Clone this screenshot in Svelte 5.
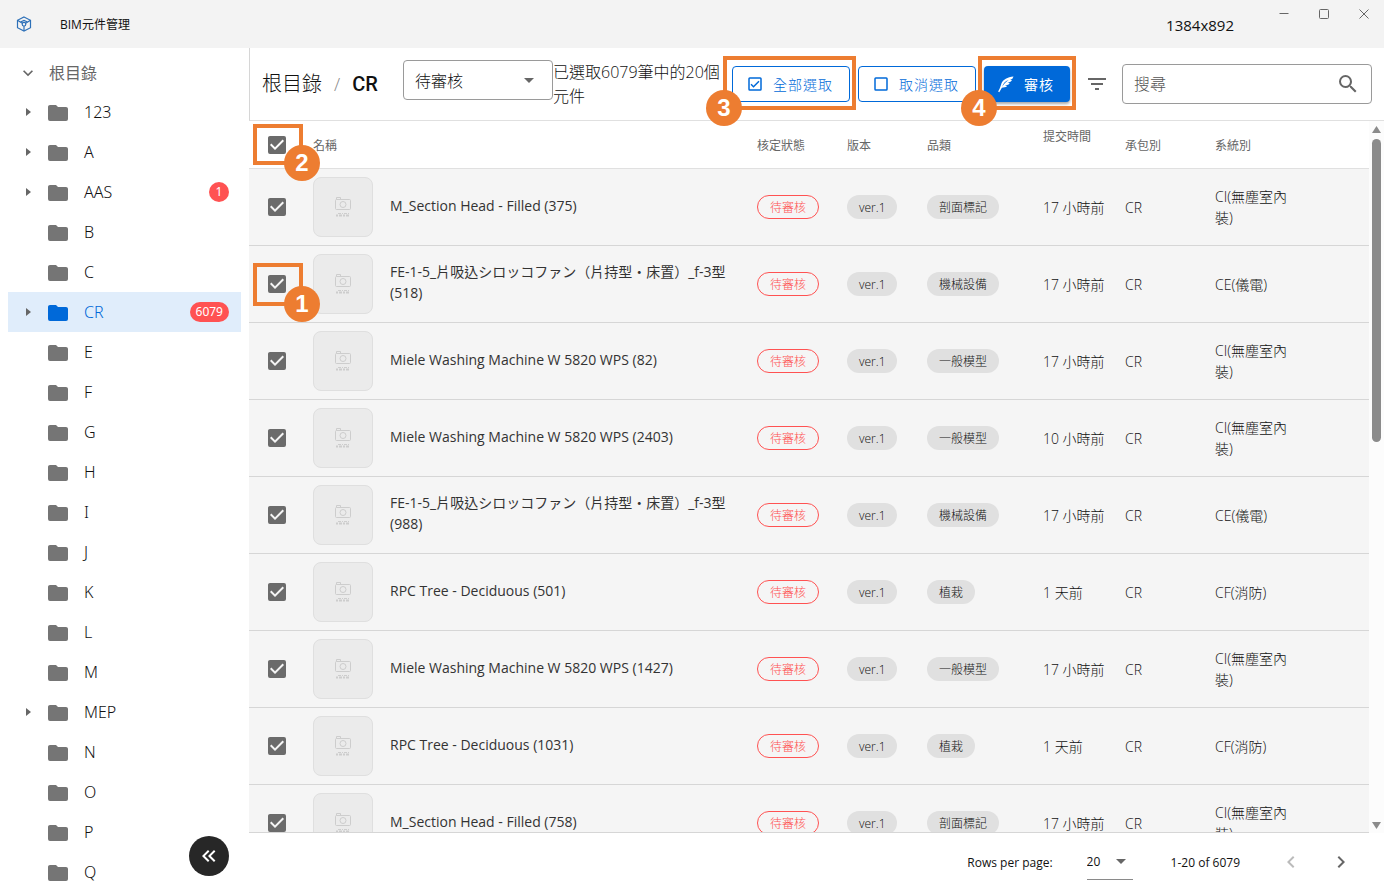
<script>
  const folders = [
    { name: '123', expandable: true },
    { name: 'A', expandable: true },
    { name: 'AAS', expandable: true, count: 1 },
    { name: 'B' },
    { name: 'C' },
    { name: 'CR', expandable: true, count: 6079 },
    ...['E', 'F', 'G', 'H', 'I', 'J', 'K', 'L', 'M'].map((name) => ({ name })),
    { name: 'MEP', expandable: true },
    ...['N', 'O', 'P', 'Q'].map((name) => ({ name }))
  ];
  let active = $state('CR');

  const CLEAN = 'CI(無塵室內裝)';
  const ELEC = 'CE(儀電)';
  const FIRE = 'CF(消防)';
  const fan = 'FE-1-5_片吸込シロッコファン（片持型・床置）_f-3型';
  let rows = $state([
    { name: 'M_Section Head - Filled (375)', kind: '剖面標記', time: '17 小時前', system: CLEAN, checked: true },
    { name: `${fan} (518)`, kind: '機械設備', time: '17 小時前', system: ELEC, checked: true, marked: true },
    { name: 'Miele Washing Machine W 5820 WPS (82)', kind: '一般模型', time: '17 小時前', system: CLEAN, checked: true },
    { name: 'Miele Washing Machine W 5820 WPS (2403)', kind: '一般模型', time: '10 小時前', system: CLEAN, checked: true },
    { name: `${fan} (988)`, kind: '機械設備', time: '17 小時前', system: ELEC, checked: true },
    { name: 'RPC Tree - Deciduous (501)', kind: '植栽', time: '1 天前', system: FIRE, checked: true },
    { name: 'Miele Washing Machine W 5820 WPS (1427)', kind: '一般模型', time: '17 小時前', system: CLEAN, checked: true },
    { name: 'RPC Tree - Deciduous (1031)', kind: '植栽', time: '1 天前', system: FIRE, checked: true },
    { name: 'M_Section Head - Filled (758)', kind: '剖面標記', time: '17 小時前', system: CLEAN, checked: true }
  ]);
  let all = $derived(rows.every((r) => r.checked));
  const setAll = (value) => rows.forEach((r) => (r.checked = value));
</script>

{#snippet caret()}
  <svg class="caret" viewBox="0 0 24 24" aria-hidden="true"><path d="M7 10l5 5 5-5z" /></svg>
{/snippet}

{#snippet check(checked, label, onchange)}
  <label class="check">
    <input type="checkbox" {checked} {onchange} aria-label={label} />
    <svg viewBox="0 0 24 24" aria-hidden="true">
      {#if checked}
        <path d="M10 17l-5-5 1.41-1.42L10 14.17l7.59-7.59L19 8m0-5H5c-1.11 0-2 .89-2 2v14a2 2 0 0 0 2 2h14a2 2 0 0 0 2-2V5a2 2 0 0 0-2-2z" />
      {:else}
        <path d="M19 3H5a2 2 0 0 0-2 2v14a2 2 0 0 0 2 2h14a2 2 0 0 0 2-2V5a2 2 0 0 0-2-2m0 2v14H5V5h14z" />
      {/if}
    </svg>
  </label>
{/snippet}

<div class="app">
  <header class="titlebar">
    <svg class="logo" viewBox="0 0 16 16" aria-hidden="true">
      <path d="M8 1l6.500 3.300v7.400L8 15l-6.500-3.300V4.300z" />
      <path d="M1.500 4.300L6.300 7.300M14.500 4.300L9.700 7.300M8 10v5M4.500 6L8 4.500 11.500 6" />
      <circle cx="8" cy="8.200" r="1.800" />
    </svg>
    <h1>BIM元件管理</h1>
    <span class="size">1384x892</span>
    <div class="window-buttons">
      <button aria-label="最小化"><svg viewBox="0 0 10 10"><path d="M.5 4.500h9" /></svg></button>
      <button aria-label="最大化"><svg viewBox="0 0 10 10"><rect x=".5" y=".5" width="9" height="9" rx="1" /></svg></button>
      <button aria-label="關閉"><svg viewBox="0 0 10 10"><path d="M.5.5l9 9M9.500.5l-9 9" /></svg></button>
    </div>
  </header>

  <div class="body">
    <nav class="sidebar">
      <button class="root">
        <svg viewBox="0 0 24 24" aria-hidden="true"><path d="M7.410 8.580L12 13.170l4.590-4.590L18 10l-6 6-6-6z" /></svg>
        根目錄
      </button>
      {#each folders as f}
        <button class="folder" class:active={active === f.name} onclick={() => (active = f.name)}>
          <span class="arrow">
            {#if f.expandable}<svg viewBox="0 0 5 8" aria-hidden="true"><path d="M0 0l5 4-5 4z" /></svg>{/if}
          </span>
          <svg class="folder-icon" viewBox="2 4 20 16" aria-hidden="true"><path d="M10 4H4c-1.110 0-2 .890-2 2v12a2 2 0 0 0 2 2h16a2 2 0 0 0 2-2V8c0-1.110-.900-2-2-2h-8z" /></svg>
          <span class="label">{f.name}</span>
          {#if f.count}<span class="badge">{f.count}</span>{/if}
        </button>
      {/each}
      <button class="collapse" aria-label="收合">
        <svg viewBox="0 0 24 24"><path d="M18.410 7.410L17 6l-6 6 6 6 1.410-1.410L13.830 12zM12.410 7.410L11 6l-6 6 6 6 1.410-1.410L7.830 12z" /></svg>
      </button>
    </nav>

    <main>
      <div class="toolbar">
        <div class="crumbs"><a href="#root">根目錄</a><span class="slash">/</span><strong>CR</strong></div>
        <div class="select">
          <select aria-label="核定狀態"><option>待審核</option></select>
          {@render caret()}
        </div>
        <p class="summary">已選取6079筆中的20個元件</p>
        <div class="actions">
          <div class="marker-anchor">
            <button class="outlined" onclick={() => setAll(true)}>
              <svg viewBox="0 0 24 24" aria-hidden="true"><path d="M19 3H5a2 2 0 0 0-2 2v14a2 2 0 0 0 2 2h14a2 2 0 0 0 2-2V5a2 2 0 0 0-2-2m0 2v14H5V5h14M10 17l-4-4 1.410-1.410L10 14.170l6.590-6.590L18 9" /></svg>
              全部選取
            </button>
            <span class="marker around-button wide"><b>3</b></span>
          </div>
          <button class="outlined" onclick={() => setAll(false)}>
            <svg viewBox="0 0 24 24" aria-hidden="true"><path d="M19 3H5a2 2 0 0 0-2 2v14a2 2 0 0 0 2 2h14a2 2 0 0 0 2-2V5a2 2 0 0 0-2-2m0 2v14H5V5h14z" /></svg>
            取消選取
          </button>
          <div class="marker-anchor">
            <button class="filled">
              <svg viewBox="0 0 24 24" aria-hidden="true"><path d="M22 2C14 3 8 6 6 11c-1 3-1.500 6-4.500 11l1.500 1 3.500-6 5.500-1 1.500-1.500-3-.2 5-1.800 1.500-2-3 0 4.500-2 1.500-2-2.500 0 3-1.500zM15.500 6.500C12 9 9 12 7 15.500 8 11 11 8 15.500 6.500z" fill-rule="evenodd" /></svg>
              審核
            </button>
            <span class="marker around-button"><b>4</b></span>
          </div>
        </div>
        <button class="filter" aria-label="篩選">
          <svg viewBox="0 0 24 24"><path d="M3 6h18v2H3zM6 11h12v2H6zM10 16h4v2h-4z" /></svg>
        </button>
        <div class="search">
          <input type="search" placeholder="搜尋" aria-label="搜尋" />
          <svg viewBox="0 0 24 24" aria-hidden="true"><path d="M9.500 3A6.500 6.500 0 0 1 16 9.500c0 1.610-.590 3.090-1.560 4.230l.27.270h.79l5 5-1.500 1.500-5-5v-.79l-.27-.27A6.516 6.516 0 0 1 9.500 16a6.500 6.500 0 0 1 0-13m0 2C7 5 5 7 5 9.500S7 14 9.500 14 14 12 14 9.500 12 5 9.500 5z" /></svg>
        </div>
      </div>

      <div class="table-area">
        <div class="table-clip">
          <table>
            <colgroup>
              <col class="c-check" /><col /><col class="c-status" /><col class="c-version" /><col class="c-kind" />
              <col class="c-time" /><col class="c-code" /><col class="c-system" /><col class="c-rest" />
            </colgroup>
            <thead>
              <tr>
                <th class="pick">
                  <div class="marker-anchor">
                    {@render check(all, '全選', () => setAll(!all))}
                    <span class="marker around-check"><b>2</b></span>
                  </div>
                </th>
                <th>名稱</th><th>核定狀態</th><th>版本</th><th>品類</th>
                <th class="sortable">提交時間</th><th>承包別</th><th>系統別</th><th></th>
              </tr>
            </thead>
            <tbody>
              {#each rows as r}
                <tr>
                  <td class="pick">
                    <div class="marker-anchor">
                      {@render check(r.checked, r.name, () => (r.checked = !r.checked))}
                      {#if r.marked}<span class="marker around-check tall"><b>1</b></span>{/if}
                    </div>
                  </td>
                  <td>
                    <div class="item">
                      <span class="thumb">
                        <svg viewBox="0 0 16 20" aria-hidden="true">
                          <rect x=".5" y="2.500" width="15" height="10" rx="1" />
                          <path d="M1.500 2.500v-2h4v2" />
                          <circle cx="8" cy="7.500" r="3" />
                          <path class="caption" d="M3 16.500h11" />
                          <path class="caption low" d="M1 18.500h14" />
                        </svg>
                      </span>
                      <span class="name">{r.name}</span>
                    </div>
                  </td>
                  <td><span class="chip pending">待審核</span></td>
                  <td><span class="chip">ver.1</span></td>
                  <td><span class="chip">{r.kind}</span></td>
                  <td>{r.time}</td>
                  <td>CR</td>
                  <td>{r.system}</td>
                  <td></td>
                </tr>
              {/each}
            </tbody>
          </table>
        </div>
        <div class="scrollbar" aria-hidden="true">
          <svg viewBox="0 0 9 7"><path d="M4.500 0L9 7H0z" /></svg>
          <span class="track"><span class="thumb-bar"></span></span>
          <svg viewBox="0 0 9 7"><path d="M0 0h9L4.500 7z" /></svg>
        </div>
      </div>

      <footer>
        <label for="page-size">Rows per page:</label>
        <div class="page-size">
          <select id="page-size"><option>20</option></select>
          {@render caret()}
        </div>
        <span class="range">1-20 of 6079</span>
        <button aria-label="上一頁" disabled><svg viewBox="0 0 24 24"><path d="M15.410 16.580L10.830 12l4.580-4.590L14 6l-6 6 6 6z" /></svg></button>
        <button aria-label="下一頁"><svg viewBox="0 0 24 24"><path d="M8.590 16.580L13.170 12 8.590 7.410 10 6l6 6-6 6z" /></svg></button>
      </footer>
    </main>
  </div>
</div>

<style>
  :global(body) { margin: 0; }
  .app {
    display: flex;
    flex-direction: column;
    height: 100vh;
    overflow: hidden;
    background: #fff;
    color: #111;
    font: 300 14px/21px "Open Sans", "Noto Sans CJK TC", sans-serif;
  }
  .app * { box-sizing: border-box; }
  button, select, input { font: inherit; color: inherit; }
  button { border: 0; padding: 0; background: none; cursor: pointer; }
  svg { display: block; flex: none; fill: currentColor; }

  .titlebar { display: flex; flex: none; height: 48px; padding-left: 16px; background: #f3f3f3; }
  .logo { width: 16px; height: 16px; margin: 16px 28px 0 0; fill: none; stroke: #2d70b8; stroke-width: 1.2; }
  h1 { flex: 1; margin: 0; padding-top: 1px; font-size: 12px; line-height: 48px; font-weight: 400; color: #111; }
  .size { padding: 13px 30px 0 0; font-size: 15px; line-height: 24px; font-weight: 400; }
  .window-buttons { display: flex; height: 28px; }
  .window-buttons button { display: grid; place-items: center; width: 40px; }
  .window-buttons svg { width: 10px; height: 10px; fill: none; stroke: #666; }

  .body { display: flex; flex: 1; min-height: 0; }
  .sidebar { position: relative; flex: none; width: 249px; padding: 4px 8px 0 8px; overflow: hidden; }
  .root, .folder { display: flex; align-items: center; width: 233px; height: 40px; font-size: 16px; text-align: left; }
  .root { padding: 2px 0 0 10px; gap: 11px; color: #666; font-weight: 400; }
  .root svg { width: 20px; height: 20px; }
  .folder { padding: 0 12px 0 18px; font-family: "Noto Sans", "Noto Sans CJK TC", sans-serif; }
  .arrow { width: 22px; color: #666; }
  .arrow svg { width: 5px; height: 8px; }
  .folder-icon { width: 20px; height: 16px; margin-top: 2px; color: #757575; }
  .label { flex: 1; padding-left: 16px; }
  .folder.active { background: #e0edfb; color: #0069d9; }
  .active .folder-icon { color: #0069d9; }
  .badge { min-width: 20px; padding: 0 6px; border-radius: 10px; background: #ff5252; color: #fff; font-size: 12px; line-height: 20px; font-weight: 400; text-align: center; }
  .collapse { position: absolute; right: 20px; bottom: 15px; display: grid; place-items: center; width: 40px; height: 40px; border-radius: 50%; background: #272727; color: #fff; }
  .collapse svg { width: 24px; height: 24px; }

  main { display: flex; flex: 1; flex-direction: column; min-width: 0; }
  .toolbar { display: flex; flex: none; align-items: center; height: 73px; padding: 0 12px; border-left: 1px solid #d6d6d6; border-bottom: 1px solid #e0e0e0; }
  .crumbs { display: flex; align-items: center; width: 141px; flex: none; font-size: 20px; line-height: 28px; }
  .crumbs a { color: inherit; text-decoration: none; }
  .slash { padding: 0 12px; font-size: 18px; color: #888; }
  strong { font-family: Roboto, sans-serif; font-weight: 500; }
  .select, .page-size { position: relative; flex: none; }
  select { appearance: none; width: 100%; background: none; outline: 0; }
  .select { width: 150px; margin-bottom: 8px; }
  .select select { height: 40px; padding: 2px 11px 0; border: 1px solid #9a9a9a; border-radius: 4px; font-size: 16px; }
  .caret { position: absolute; top: 50%; right: 12px; width: 24px; height: 24px; margin-top: -12px; color: #666; pointer-events: none; }
  .summary { flex: 1; margin: 0; font-size: 16px; line-height: 24px; }
  .actions { display: flex; gap: 8px; padding-left: 8px; }
  .actions button { display: flex; align-items: center; gap: 9px; height: 36px; padding: 0 16px 0 13px; border-radius: 4px; letter-spacing: 1px; white-space: nowrap; }
  .actions svg { width: 18px; height: 18px; }
  .outlined { border: 1px solid #0069d9; color: #0069d9; }
  .filled { background: #0069d9; color: #fff; font-weight: 400; box-shadow: 0 2px 3px rgb(0 0 0 / 35%); }
  .filter { margin: 0 13px 0 15px; color: #666; }
  .filter svg { width: 24px; height: 24px; }
  .search { display: flex; align-items: center; width: 250px; height: 40px; padding: 0 11px; border: 1px solid #9a9a9a; border-radius: 4px; color: #666; }
  .search input { flex: 1; min-width: 0; padding: 0; border: 0; outline: 0; background: none; font-size: 16px; }
  .search input::placeholder { color: #555; opacity: 1; }
  .search svg { width: 24px; height: 24px; }

  .marker-anchor { position: relative; }
  .marker { position: absolute; z-index: 2; border: 4px solid #ed7d31; pointer-events: none; }
  .marker b { position: absolute; width: 36px; height: 36px; border-radius: 50%; background: #ed7d31; color: #fff; font: 700 24px/36px "Liberation Sans", sans-serif; text-align: center; }
  .around-button { inset: -10px -6px -8px; }
  .around-button.wide { left: -9px; }
  .around-button b { left: -21px; bottom: -20px; }
  .around-check { inset: -9px -14px -8px -12px; }
  .around-check.tall { bottom: -10px; }
  .around-check b { right: -21px; bottom: -20px; }

  .table-area { display: flex; flex: 1; min-height: 0; }
  .table-clip { flex: 1; min-width: 0; overflow: hidden; border-bottom: 1px solid #d6d6d6; }
  table { width: 100%; table-layout: fixed; border-collapse: separate; border-spacing: 0; }
  .c-check { width: 56px; }
  .c-status, .c-code, .c-system { width: 90px; }
  .c-version { width: 80px; }
  .c-kind { width: 116px; }
  .c-time { width: 82px; }
  .c-rest { width: 72px; }
  th, td { padding: 0 8px; text-align: left; }
  th { height: 48px; padding-top: 2px; border-bottom: 1px solid #e0e0e0; font-size: 12px; font-weight: 400; color: #666; }
  th.sortable { padding-bottom: 18px; }
  td { height: 77px; border-bottom: 1px solid #d6d6d6; background: #f5f5f5; }
  .pick { padding: 0 0 0 16px; }
  .pick .marker-anchor { width: 24px; height: 24px; }
  .check { position: relative; display: block; width: 24px; height: 24px; color: #6b6b6b; }
  .check input { position: absolute; inset: 0; width: 24px; height: 24px; margin: 0; opacity: 0; cursor: pointer; }
  .check svg { width: 24px; height: 24px; }
  .item { display: flex; align-items: center; gap: 17px; }
  .name { padding-bottom: 4px; font-weight: 400; color: #333; }
  .thumb { display: grid; flex: none; place-items: center; width: 60px; height: 60px; border: 1px solid #dfdfdf; border-radius: 8px; background: #ebebeb; }
  .thumb svg { width: 16px; height: 20px; fill: none; stroke: #cdcdcd; }
  .thumb .caption { stroke-width: 1; stroke-dasharray: 3 1 1 1; }
  .thumb .low { stroke-width: 2; stroke-dasharray: 2 1 3 1; }
  .chip { display: inline-block; padding: 1px 12px 0; border-radius: 12px; background: #e0e0e0; font-size: 12px; line-height: 23px; white-space: nowrap; vertical-align: middle; }
  .pending { border: 1px solid #ff5252; background: none; color: #ff5252; line-height: 21px; }

  .scrollbar { display: flex; flex: none; flex-direction: column; align-items: center; width: 15px; padding: 5px 0 4px; background: #fcfcfc; color: #8b8b8b; }
  .scrollbar svg { width: 9px; height: 7px; }
  .track { flex: 1; width: 9px; padding: 6px 0; }
  .thumb-bar { display: block; height: 303px; border-radius: 5px; background: #8b8b8b; }

  footer { display: flex; flex: none; align-items: center; justify-content: flex-end; height: 58px; padding-right: 31px; font-size: 12px; font-weight: 400; }
  .page-size { width: 46px; margin: 2px 38px 0 34px; border-bottom: 1px solid #8a8a8a; }
  .page-size select { height: 32px; padding: 0 0 2px; border: 0; }
  .page-size .caret { right: 0; margin-top: -14px; }
  .range { margin-right: 39px; }
  footer button { width: 24px; height: 24px; margin-left: 26px; color: #666; }
  .range + button { margin-left: 0; }
  footer button:disabled { color: #bbb; }
  footer svg { width: 24px; height: 24px; }
</style>
